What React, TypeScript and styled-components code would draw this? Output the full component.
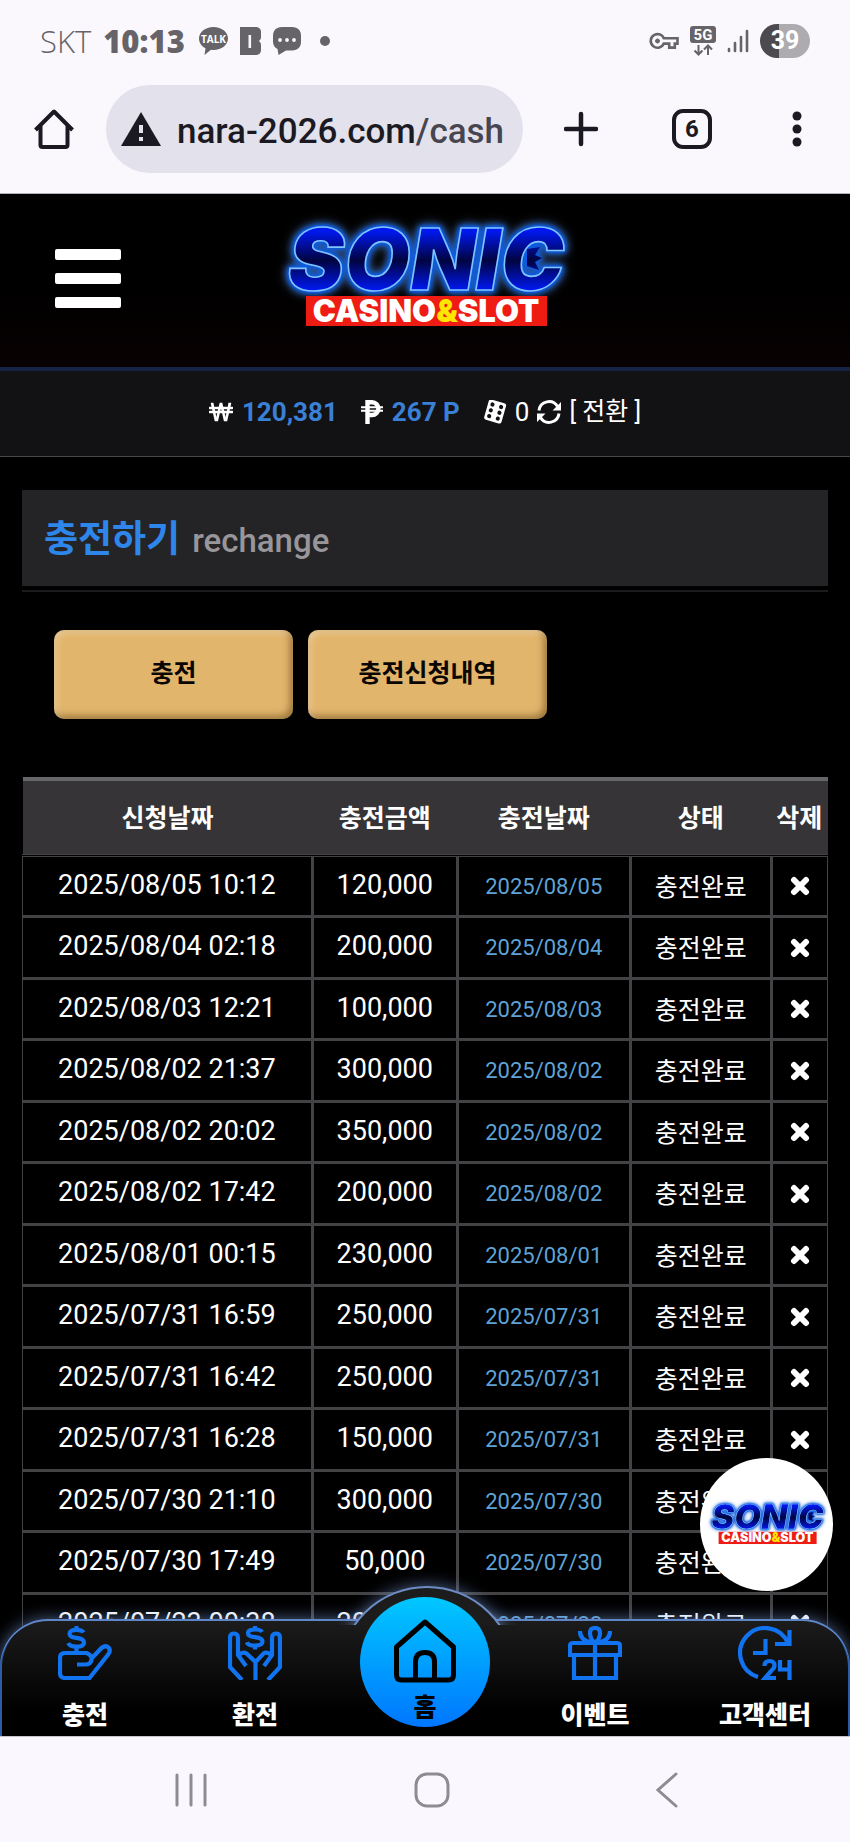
import React from 'react';
import styled, { createGlobalStyle } from 'styled-components';
import { FaWonSign } from 'react-icons/fa';

const GlobalStyle = createGlobalStyle`
  * {
    box-sizing: border-box;
  }

  body {
    margin: 0;
    background: #000;
    color: #fff;
    font-family: Roboto, "Noto Sans CJK KR", sans-serif;
  }

  a {
    color: inherit;
    text-decoration: none;
  }

  button {
    margin: 0;
    padding: 0;
    border: 0;
    background: none;
    color: inherit;
    font: inherit;
    cursor: pointer;
  }

  svg {
    display: block;
    flex: none;
  }
`;

const Screen = styled.div`
  display: flex;
  flex-direction: column;
  height: 100vh;
`;

const PhoneTop = styled.div`
  flex: none;
  background: #faf8fd;
  border-bottom: 1px solid #b4b4b8;
`;

const StatusBar = styled.div`
  display: flex;
  align-items: center;
  justify-content: space-between;
  height: 82px;
  padding: 0 40px;
  color: #666468;
`;

const StatusGroup = styled.div<{ $gap: number }>`
  display: flex;
  align-items: center;
  gap: ${({ $gap }) => $gap}px;
`;

const Carrier = styled.span`
  font: 300 31px/40px "Open Sans", sans-serif;
`;

const Clock = styled.span`
  margin-right: 2px;
  font: 800 31px/40px "Open Sans", sans-serif;
`;

const Battery = styled.span`
  width: 50px;
  border-radius: 17px;
  background: linear-gradient(90deg, #4c4a4e 38%, #adabaf 38%);
  color: #fff;
  font: 700 25px/34px Roboto, sans-serif;
  text-align: center;
`;

const UrlBar = styled.div`
  display: flex;
  align-items: center;
  height: 111px;
  padding: 3px 48px 20px 34px;
  color: #1b1921;
`;

const AddressPill = styled.div`
  display: flex;
  flex: 1;
  align-items: center;
  min-width: 0;
  height: 88px;
  margin: 0 41px 0 32px;
  padding: 0 17px 0 15px;
  border-radius: 44px;
  background: #e3e1ec;
`;

const Address = styled.div`
  flex: 1;
  min-width: 0;
  margin-left: 16px;
  padding-top: 6px;
  overflow: hidden;
  color: #1b1921;
  font: 500 35px/48px Roboto, sans-serif;
  white-space: nowrap;

  span {
    color: #474550;
  }
`;

const TabCount = styled.button`
  width: 40px;
  height: 40px;
  margin: 0 80px 0 74px;
  border: 4px solid #1b1921;
  border-radius: 11px;
  font: 700 24px/32px Roboto, sans-serif;
`;

const Site = styled.div`
  position: relative;
  flex: 1;
  min-height: 0;
  overflow: hidden;
`;

const Header = styled.header`
  display: grid;
  grid-template-columns: 1fr auto 1fr;
  align-items: center;
  height: 177px;
  padding: 0 55px 4px;
  border-bottom: 4px solid #172345;
  background: linear-gradient(#000 50%, #080102);
`;

const MenuButton = styled.button`
  display: grid;
  gap: 13px;
  width: 66px;

  span {
    height: 11px;
    border-radius: 2px;
    background: #fff;
  }
`;

const Balance = styled.div`
  display: flex;
  align-items: center;
  justify-content: center;
  height: 86px;
  padding-bottom: 4px;
  border-bottom: 1px solid #48484a;
  background: #121114;
  font-size: 26px;
  line-height: 36px;
`;

const Amount = styled.strong`
  margin: 0 23px 0 9px;
  color: #3a80d6;
  font-weight: 700;
`;

const Games = styled.span`
  margin: 0 8px;
`;

const Convert = styled.button`
  margin-left: 8px;
  font-size: 25px;
`;

const Content = styled.main`
  padding: 33px 22px 0;
`;

const TitleBar = styled.h1`
  display: flex;
  align-items: baseline;
  gap: 12px;
  margin: 0;
  padding: 21px 22px 17px;
  background: #242326;
  color: #2f86ea;
  font-size: 37px;
  font-weight: 700;
  line-height: 57px;

  small {
    color: #98969a;
    font-size: 33px;
    font-weight: 500;
  }
`;

const Divider = styled.hr`
  height: 2px;
  margin: 4px 0 38px;
  border: 0;
  background: #1b1a1c;
`;

const TabRow = styled.div`
  display: flex;
  gap: 15px;
  padding: 0 32px;
`;

const GoldButton = styled.button`
  width: 239px;
  height: 89px;
  padding-bottom: 7px;
  border-radius: 10px;
  background: #e2b56c;
  box-shadow: inset 3px 3px 6px rgba(255, 255, 255, 0.3), inset -3px -3px 7px rgba(80, 50, 0, 0.5);
  color: #0a0604;
  font-size: 25px;
  font-weight: 700;
`;

const History = styled.table`
  width: 100%;
  margin-top: 58px;
  border-collapse: collapse;
  table-layout: fixed;

  th {
    height: 76px;
    padding: 0 0 3px;
    border-top: 4px solid #666568;
    border-bottom: 3px double #434244;
    background: #363437;
    font-size: 25px;
    font-weight: 700;
    white-space: nowrap;
  }

  td {
    height: 61px;
    padding: 0 0 2px;
    border: 3px solid #434244;
    font-size: 27px;
    text-align: center;
  }

  td:first-child {
    border-left-width: 1px;
  }

  td:last-child {
    border-right-width: 1px;
  }

  tbody tr:nth-child(even) td {
    height: 62px;
  }
`;

const Paid = styled.td`
  && {
    padding: 1px 0 0;
    color: #5fa3d6;
    font-size: 22px;
  }
`;

const State = styled.td`
  && {
    font-size: 25px;
  }
`;

const RemoveButton = styled.button`
  display: inline-block;
  vertical-align: middle;
`;

const ChatBubble = styled.a`
  position: absolute;
  right: 17px;
  bottom: 145px;
  display: grid;
  place-items: center;
  width: 133px;
  height: 133px;
  border-radius: 50%;
  background: #fff;
`;

const BottomNav = styled.nav`
  position: absolute;
  right: 0;
  bottom: 0;
  left: 0;
  display: grid;
  grid-template-columns: repeat(5, 1fr);
  height: 117px;
  border-radius: 48px 48px 0 0;
  background: linear-gradient(#1c1c1c, #000 80%);
  box-shadow: inset 0 2px #5f86c6, inset 2px 0 #2c5ca6, inset -2px 0 #2c5ca6, 0 0 16px rgba(130, 165, 230, 0.6);

  &::before {
    content: "";
    position: absolute;
    top: -33px;
    left: 50%;
    width: 174px;
    height: 174px;
    margin-left: -87px;
    border: 2px solid #6c8cc4;
    border-radius: 50%;
    background: #1c1c1c;
    box-shadow: 0 0 16px rgba(130, 165, 230, 0.6);
    clip-path: inset(-24px -24px 139px -24px);
  }
`;

const NavLink = styled.a`
  display: flex;
  flex-direction: column;
  align-items: center;
  justify-content: space-between;
  padding: 7px 0 2px;
  color: #fff;
  font-size: 25px;
  font-weight: 900;
  line-height: 36px;

  svg {
    color: #1173ef;
  }
`;

const HomeLink = styled.a`
  position: relative;
  display: flex;
  flex-direction: column;
  align-items: center;
  justify-content: space-between;
  justify-self: center;
  width: 130px;
  height: 130px;
  margin-top: -22px;
  padding: 22px 0 3px;
  border-radius: 50%;
  background: linear-gradient(#00c8ff, #0076ff);
  color: #000;
  font-size: 25px;
  font-weight: 900;
  line-height: 32px;
`;

const SystemBar = styled.div`
  display: flex;
  flex: none;
  align-items: center;
  justify-content: space-between;
  height: 106px;
  padding: 0 172px 0 174px;
  border-top: 1px solid #c8c6ca;
  background: #faf8fe;
  color: #8e8c90;
`;

const columns = [
  { label: '신청날짜', width: '36%' },
  { label: '충전금액', width: '18%' },
  { label: '충전날짜', width: '21.5%' },
  { label: '상태', width: '17.5%' },
  { label: '삭제', width: '7%' },
];

const requests = [
  ['2025/08/05 10:12', '120,000', '2025/08/05'],
  ['2025/08/04 02:18', '200,000', '2025/08/04'],
  ['2025/08/03 12:21', '100,000', '2025/08/03'],
  ['2025/08/02 21:37', '300,000', '2025/08/02'],
  ['2025/08/02 20:02', '350,000', '2025/08/02'],
  ['2025/08/02 17:42', '200,000', '2025/08/02'],
  ['2025/08/01 00:15', '230,000', '2025/08/01'],
  ['2025/07/31 16:59', '250,000', '2025/07/31'],
  ['2025/07/31 16:42', '250,000', '2025/07/31'],
  ['2025/07/31 16:28', '150,000', '2025/07/31'],
  ['2025/07/30 21:10', '300,000', '2025/07/30'],
  ['2025/07/30 17:49', '50,000', '2025/07/30'],
  ['2025/07/23 00:38', '200,000', '2025/07/23'],
];

const Wordmark = styled.g`
  filter: drop-shadow(0 0 1px #0a5ce6) drop-shadow(0 0 2px #0a5ce6) drop-shadow(0 0 3px #0a5ce6)
    drop-shadow(0 0 5px rgba(110, 150, 210, 0.6));
`;

function Logo({ width, small }: { width: number; small?: boolean }) {
  const id = small ? 'logo-small' : 'logo-large';

  return (
    <svg width={width} viewBox="0 -20 300 152" role="img" aria-label="Sonic Casino & Slot">
      <defs>
        <linearGradient id={id} gradientUnits="userSpaceOnUse" x1="0" y1="8" x2="0" y2="67">
          <stop offset="0" stopColor="#0018f0" />
          <stop offset="0.5" stopColor="#000440" />
          <stop offset="1" stopColor="#0018f0" />
        </linearGradient>
      </defs>
      <Wordmark fill={`url(#${id})`} stroke="#7fc4ff" strokeWidth="1.6">
        <text
          x="151"
          y="67"
          fontFamily="Inter, sans-serif"
          fontWeight="900"
          fontStyle="italic"
          fontSize="85"
          textAnchor="middle"
        >
          SONIC
        </text>
        <path d="M252 26l13-2-5 8 7 3-7 4 4 8-12-4z" stroke="none" />
      </Wordmark>
      <rect x="31" y="73" width="241" height="30" fill="#ee1c12" />
      <text
        x="151"
        y="99"
        fill="#fff"
        fontFamily="Inter, sans-serif"
        fontWeight="900"
        fontSize="31"
        textAnchor="middle"
      >
        CASINO<tspan fill="#ffe600">&amp;</tspan>SLOT
      </text>
    </svg>
  );
}

function TalkIcon() {
  return (
    <svg width="29" height="28" viewBox="0 0 29 28" fill="currentColor">
      <path d="M14.500 0C6.500 0 0 5 0 11.500c0 4.200 2.600 7.800 6.500 9.800L5.500 28l6.500-5.200c.8.100 1.700.2 2.500.2C22.500 23 29 18 29 11.500S22.500 0 14.500 0z" />
      <text x="14.500" y="15.500" fill="#fff" fontFamily="Open Sans, sans-serif" fontWeight="700" fontSize="10" textAnchor="middle">
        TALK
      </text>
    </svg>
  );
}

function BandIcon() {
  return (
    <svg width="21" height="28" viewBox="0 0 21 28">
      <path
        fill="currentColor"
        d="M0 0h15c4 0 6 2 6 5v5c0 2-1 3.500-2.500 4C20 14.500 21 16 21 18v5c0 3-2 5-6 5H0z"
      />
      <rect x="8.500" y="8" width="2.600" height="13" fill="#faf8fd" />
    </svg>
  );
}

function MessageIcon() {
  return (
    <svg width="28" height="28" viewBox="0 0 28 28">
      <path
        fill="currentColor"
        d="M9 0h10c6 0 9 3.500 9 9v5.500c0 5.500-3 9-9 9h-6L5.500 28l-1-6C1.500 20.500 0 18 0 14.500V9c0-5.500 3-9 9-9z"
      />
      <g fill="#faf8fd">
        <circle cx="7" cy="13" r="1.900" />
        <circle cx="14" cy="13" r="1.900" />
        <circle cx="21" cy="13" r="1.900" />
      </g>
    </svg>
  );
}

function KeyIcon() {
  return (
    <svg width="30" height="18" viewBox="0 0 30 18" fill="none" stroke="currentColor" strokeWidth="2.600">
      <path d="M14.800 6.200H28.500v5.400h-2.700v4h-5.600v-4h-5.400a6.800 6.800 0 1 1 0-5.400z" />
      <circle cx="8.500" cy="9" r="2" fill="currentColor" strokeWidth="1" />
    </svg>
  );
}

function NetworkIcon() {
  return (
    <svg width="26" height="30" viewBox="0 0 26 30">
      <rect width="26" height="17" rx="3" fill="currentColor" />
      <text x="13" y="14" fill="#fff" fontFamily="Roboto, sans-serif" fontWeight="700" fontSize="15" textAnchor="middle">
        5G
      </text>
      <path
        d="M8.500 19v9M4.500 24.500l4 4 4-4M18 29v-9M14 23.500l4-4 4 4"
        fill="none"
        stroke="currentColor"
        strokeWidth="2"
      />
    </svg>
  );
}

function SignalIcon() {
  return (
    <svg width="22" height="24" viewBox="0 0 22 24" stroke="currentColor" strokeWidth="2.600" strokeLinecap="round">
      <path d="M2 20v2M8 14v8M14 8v14M20 2v20" />
    </svg>
  );
}

function BrowserHomeIcon() {
  return (
    <svg width="40" height="40" viewBox="0 0 40 40" fill="none" stroke="currentColor" strokeWidth="4" strokeLinejoin="round">
      <path d="M1.500 21L20 2.500 38.500 21M6.500 17v19q0 2 2 2h23q2 0 2-2V17" />
    </svg>
  );
}

function PesoIcon() {
  return (
    <svg width="22" height="24" viewBox="0 0 22 24" fill="none" stroke="#fff">
      <path d="M6.500 24V2.200H11a5.300 5.300 0 0 1 0 12.800H6.500" strokeWidth="4.400" />
      <path d="M0 7.200h22M0 10.800h22" strokeWidth="2" />
    </svg>
  );
}

function DiceIcon() {
  return (
    <svg width="24" height="24" viewBox="0 0 24 24">
      <g transform="rotate(16 12 12)">
        <rect x="3" y="1" width="18" height="21" rx="2.500" fill="#fff" />
        <g fill="#121114">
          {[5.5, 11.5, 17.5].map((cy) => (
            <React.Fragment key={cy}>
              <circle cx="7.500" cy={cy} r="2.100" />
              <circle cx="16.500" cy={cy} r="2.100" />
            </React.Fragment>
          ))}
        </g>
      </g>
    </svg>
  );
}

function RefreshIcon() {
  return (
    <svg width="24" height="24" viewBox="0 0 24 24" fill="none" stroke="#fff" strokeWidth="3">
      <path d="M2 10.500A10 10 0 0 1 20.500 6.500M22 13.500A10 10 0 0 1 3.500 17.500" />
      <path d="M24 2v8.500h-8.500zM0 22v-8.500h8.500z" fill="#fff" stroke="none" />
    </svg>
  );
}

function RemoveIcon() {
  return (
    <svg width="20" height="20" viewBox="0 0 20 20" stroke="currentColor" strokeWidth="6" strokeLinecap="round">
      <path d="M4 4l12 12M16 4L4 16" />
    </svg>
  );
}

function DepositIcon() {
  return (
    <svg width="54" height="54" viewBox="0 0 54 54" fill="none" stroke="currentColor" strokeWidth="4.200">
      <path d="M25.500 6.500c-1-2-3-2.700-7-2.700-4.500 0-7 1.300-7 3.900s2 3.600 7 4.200 7.500 1.800 7.500 4.600-3 4.200-7.500 4.200-7.300-1.200-8.200-3.600M18.500 0v4M18.500 20v6" />
      <path d="M19 38.500h8.500q5 0 6-4.500T28.500 27H7q-5 0-5 5v15q0 5 5 5h24.500L50.500 28q2.500-4 0-6.500t-6.500 0L33 33" />
    </svg>
  );
}

function WithdrawIcon() {
  return (
    <svg width="54" height="54" viewBox="0 0 54 54" fill="none" stroke="currentColor" strokeWidth="4.200">
      <path d="M34 6c-1-2-3-2.500-7-2.500-4.500 0-7 1.200-7 3.700s2 3.400 7 4 7.500 1.800 7.500 4.400-3 4-7.500 4-7.300-1-8.200-3.400M27 0v4M27 19.500v4" />
      <path d="M14 54L2 41V12q0-4.500 4-4.500t4 4.500v17l8 11M40 54l12-13V12q0-4.500-4-4.500t-4 4.500v17l-8 11" />
      <path d="M27.500 54V36l-9-8.500q-3-2-7 1M27.500 36l8-8.500q3-2 7 1" />
    </svg>
  );
}

function EventIcon() {
  return (
    <svg width="54" height="54" viewBox="0 0 54 54" fill="none" stroke="currentColor" strokeWidth="4.200">
      <path d="M6 30v22h42V30M5 17h44q3 0 3 3v9H2v-9q0-3 3-3zM27 17v35" />
      <path d="M27 17q-5-4-5-10 0-5 5-5t5 5q0 6-5 10M22 16Q12 14 12 5M32 16Q42 14 42 5" />
    </svg>
  );
}

function SupportIcon() {
  return (
    <svg width="54" height="54" viewBox="0 0 54 54" fill="none" stroke="currentColor" strokeWidth="4.200">
      <path d="M20 51A25 25 0 1 1 50 17M51.500 4v14H37M27.500 13v14H15" />
      <path d="M26.500 40q0-5 5-5t5 4.500q0 2.500-3 5L27 52h11M42 34v9.500h9M51.500 34v20" />
    </svg>
  );
}

function HouseIcon() {
  return (
    <svg width="62" height="64" viewBox="0 0 62 64" fill="none" stroke="currentColor" strokeWidth="5" strokeLinejoin="round">
      <path d="M2.500 28L31 3l28.500 25v28q0 5-5 5h-47q-5 0-5-5z" />
      <path d="M21.500 61V43q0-9.500 9.500-9.500t9.500 9.500v18" />
    </svg>
  );
}

function App(): React.JSX.Element {
  return (
    <Screen>
      <GlobalStyle />
      <PhoneTop>
        <StatusBar>
          <StatusGroup $gap={12}>
            <Carrier>SKT</Carrier>
            <Clock>10:13</Clock>
            <TalkIcon />
            <BandIcon />
            <MessageIcon />
            <svg width="46" height="10" viewBox="0 0 46 10" fill="currentColor">
              <circle cx="12" cy="5" r="5" />
            </svg>
          </StatusGroup>
          <StatusGroup $gap={11}>
            <KeyIcon />
            <NetworkIcon />
            <SignalIcon />
            <Battery>39</Battery>
          </StatusGroup>
        </StatusBar>
        <UrlBar>
          <button aria-label="Home page">
            <BrowserHomeIcon />
          </button>
          <AddressPill>
            <svg width="40" height="34" viewBox="0 0 40 34">
              <path d="M20 0l20 34H0z" fill="#1b1921" />
              <path d="M20 13v8M20 25v4" stroke="#e3e1ec" strokeWidth="4" />
            </svg>
            <Address>
              nara-2026.com<span>/cash</span>
            </Address>
          </AddressPill>
          <button aria-label="New tab">
            <svg width="34" height="36" viewBox="0 0 34 36" stroke="currentColor" strokeWidth="4.500" strokeLinecap="round">
              <path d="M17 3v30M2 18h30" />
            </svg>
          </button>
          <TabCount aria-label="Open tabs">6</TabCount>
          <button aria-label="More">
            <svg width="10" height="36" viewBox="0 0 10 36" fill="currentColor">
              <circle cx="5" cy="5" r="4.500" />
              <circle cx="5" cy="18" r="4.500" />
              <circle cx="5" cy="31" r="4.500" />
            </svg>
          </button>
        </UrlBar>
      </PhoneTop>

      <Site>
        <Header>
          <MenuButton aria-label="Menu">
            <span />
            <span />
            <span />
          </MenuButton>
          <a href="#home">
            <Logo width={300} />
          </a>
        </Header>
        <Balance>
          <FaWonSign size={24} />
          <Amount>120,381</Amount>
          <PesoIcon />
          <Amount>267 P</Amount>
          <DiceIcon />
          <Games>0</Games>
          <RefreshIcon />
          <Convert>[ 전환 ]</Convert>
        </Balance>

        <Content>
          <TitleBar>
            충전하기 <small>rechange</small>
          </TitleBar>
          <Divider />
          <TabRow>
            <GoldButton>충전</GoldButton>
            <GoldButton>충전신청내역</GoldButton>
          </TabRow>
          <History>
            <colgroup>
              {columns.map((column) => (
                <col key={column.label} width={column.width} />
              ))}
            </colgroup>
            <thead>
              <tr>
                {columns.map((column) => (
                  <th key={column.label}>{column.label}</th>
                ))}
              </tr>
            </thead>
            <tbody>
              {requests.map(([requested, amount, paid]) => (
                <tr key={requested}>
                  <td>{requested}</td>
                  <td>{amount}</td>
                  <Paid>{paid}</Paid>
                  <State>충전완료</State>
                  <td>
                    <RemoveButton aria-label="삭제">
                      <RemoveIcon />
                    </RemoveButton>
                  </td>
                </tr>
              ))}
            </tbody>
          </History>
        </Content>

        <ChatBubble href="#chat">
          <Logo width={122} small />
        </ChatBubble>
        <BottomNav>
          <NavLink href="#deposit">
            <DepositIcon />
            충전
          </NavLink>
          <NavLink href="#withdraw">
            <WithdrawIcon />
            환전
          </NavLink>
          <HomeLink href="#home">
            <HouseIcon />
            홈
          </HomeLink>
          <NavLink href="#event">
            <EventIcon />
            이벤트
          </NavLink>
          <NavLink href="#support">
            <SupportIcon />
            고객센터
          </NavLink>
        </BottomNav>
      </Site>

      <SystemBar>
        <button aria-label="Recent apps">
          <svg width="34" height="34" viewBox="0 0 34 34" stroke="currentColor" strokeWidth="3" strokeLinecap="round">
            <path d="M3 2v30M17 2v30M31 2v30" />
          </svg>
        </button>
        <button aria-label="Home">
          <svg width="36" height="36" viewBox="0 0 36 36" fill="none" stroke="currentColor" strokeWidth="3">
            <rect x="2" y="2" width="32" height="32" rx="11" />
          </svg>
        </button>
        <button aria-label="Back">
          <svg width="22" height="36" viewBox="0 0 22 36" fill="none" stroke="currentColor" strokeWidth="3" strokeLinecap="round">
            <path d="M20 2L2 18l18 16" />
          </svg>
        </button>
      </SystemBar>
    </Screen>
  );
}

export default App;
